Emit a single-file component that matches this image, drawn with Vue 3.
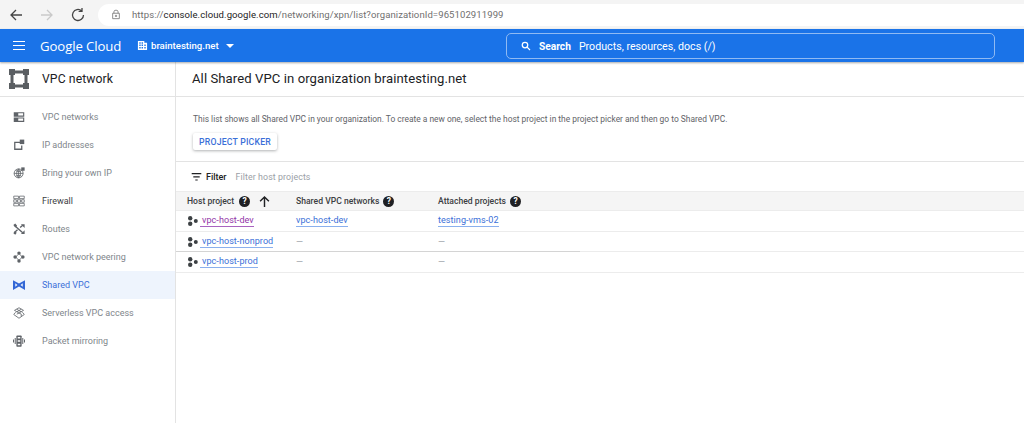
<script setup>
const nav = [
  { label: 'VPC networks', kind: 'net' },
  { label: 'IP addresses', kind: 'ip' },
  { label: 'Bring your own IP', kind: 'globe' },
  { label: 'Firewall', kind: 'fire', dark: true },
  { label: 'Routes', kind: 'routes' },
  { label: 'VPC network peering', kind: 'peer' },
  { label: 'Shared VPC', kind: 'shared', active: true },
  { label: 'Serverless VPC access', kind: 'server' },
  { label: 'Packet mirroring', kind: 'packet' }
]
const rows = [
  { name: 'vpc-host-dev', visited: true, net: 'vpc-host-dev', att: 'testing-vms-02' },
  { name: 'vpc-host-nonprod', net: '', att: '' },
  { name: 'vpc-host-prod', net: '', att: '' }
]
</script>

<template>
  <div class="page">
    <div class="chrome">
      <svg class="cicon back" viewBox="0 0 16 16"><path d="M14 8H3M8 3 3 8l5 5" /></svg>
      <svg class="cicon fwd" viewBox="0 0 16 16"><path d="M2 8h11M8 3l5 5-5 5" /></svg>
      <svg class="cicon reload" viewBox="0 0 16 16"><path d="M13.500 8A5.500 5.500 0 1 1 11.600 3.800M12 1v3.400H8.600" /></svg>
      <div class="omni">
        <svg class="lock" viewBox="0 0 12 12"><path d="M3.500 4.500V2.800a2.500 2 0 0 1 5 0V4.500M2 4.500h8V11H2z" /><path d="M5.300 7h1.400v1.400H5.300z" /></svg>
        <span class="url">https://<b>console.cloud.google.com</b>/networking/xpn/list?organizationId=965102911999</span>
      </div>
    </div>

    <header class="topbar">
      <div class="burger"><i></i><i></i><i></i></div>
      <span class="logo">Google Cloud</span>
      <svg class="org" viewBox="0 0 12 12"><path fill-rule="evenodd" d="M1 1h7v2h3v8H1zM2.500 2.500v1.500H4V2.500zM5 2.500v1.500h1.500V2.500zM2.500 5v1.500H4V5zM5 5v1.500h1.500V5zM8 5v1.500h1.500V5zM2.500 7.700v1.500H4V7.700zM5 7.700v1.500h1.500V7.700zM8 7.700v1.500h1.500V7.700z" /></svg>
      <span class="orgname">braintesting.net</span>
      <span class="caret"></span>
      <div class="search">
        <svg class="mag" viewBox="0 0 12 12"><circle cx="4.800" cy="4.800" r="3.300" /><path d="m7.300 7.300 3.500 3.500" /></svg>
        <b>Search</b>
        <span>Products, resources, docs (/)</span>
      </div>
    </header>

    <div class="body">
      <aside class="side">
        <div class="sidehead">
          <svg class="vpc" viewBox="0 0 20 20"><path d="M0 0h6v6H0zM14 0h6v6h-6zM0 14h6v6H0zM14 14h6v6h-6z" /><path d="M6 1.500h8v3H6zM6 15.500h8v3H6zM1.500 6h3v8h-3zM15.500 6h3v8h-3z" /></svg>
          <span>VPC network</span>
        </div>
        <nav class="navlist">
          <div v-for="n in nav" :key="n.label" class="item" :class="{ active: n.active, dark: n.dark }">
            <svg class="nicon" viewBox="0 0 16 16">
              <template v-if="n.kind === 'net'"><path d="M1 1.500h14v6H1zM1 8.500h14v6H1z" /><path fill="#fff" d="M7 3h6.500v3H7zM7 10h6.500v3H7z" /></template>
              <template v-else-if="n.kind === 'ip'"><path d="M1.500 3.500h8v1.700H3.200v7.600h7.600V8.500h1.700v6h-11z" /><path d="M9 .8h6v6H9z" /></template>
              <template v-else-if="n.kind === 'globe'"><circle class="line" cx="7.500" cy="8.500" r="6" /><path class="line" d="M1.500 8.500h12M7.500 2.500v12M3.500 4.500c2.500 2 5.500 2 8 0M3.500 12.500c2.500-2 5.500-2 8 0M7.500 2.500c-3.500 3.500-3.500 8.500 0 12M7.500 2.500c3.500 3.500 3.500 8.500 0 12" /><path d="M11 .5h4.500V5H11z" /></template>
              <template v-else-if="n.kind === 'fire'"><path class="line thin" d="M1 1.500h6.300v3.300H1zM8.700 1.500H15v3.300H8.700zM1 6.300h3.500v3.400H1zM6 6.300h4v3.400H6zM11.500 6.300H15v3.400h-3.500zM1 11.200h6.300v3.300H1zM8.700 11.200H15v3.300H8.700z" /></template>
              <template v-else-if="n.kind === 'routes'"><path class="bold" d="M1.500 3 13 13M1.500 13 6 9M9.500 6 13 3" /><path d="M10.500 1.500h5v5zM10.500 14.500h5v-5zM.5 2.500 3 .5l2.500 3-2 2.500zM.5 13.500l2-2.500 2.500 2-2 2.500z" /></template>
              <template v-else-if="n.kind === 'peer'"><path class="line" d="M8 3.500 12.500 8 8 12.500 3.500 8z" /><circle cx="8" cy="2.800" r="2.300" /><circle cx="8" cy="13.200" r="2.300" /><circle cx="2.800" cy="8" r="2.300" /><circle cx="13.200" cy="8" r="2.300" /></template>
              <template v-else-if="n.kind === 'shared'"><path d="M0 1.500 8 6l8-4.500v13L8 10l-8 4.500zM3 5.800v4.400L6 8zM13 5.800 10 8l3 2.200z" fill-rule="evenodd" /></template>
              <template v-else-if="n.kind === 'server'"><path class="line" d="M8 1 14 4.500 8 8 2 4.500zM3.500 7 1 10l7 5 7-5-2.500-3M5 3l6 3.500M11 3 5 6.500M5 9.500l3-1.500 3 1.500v3" /></template>
              <template v-else><path d="M5.500 .5h5a1 1 0 0 1 1 1v13a1 1 0 0 1-1 1h-5a1 1 0 0 1-1-1v-13a1 1 0 0 1 1-1z" /><path fill="#fff" d="M6.300 2.500h3.400v2H6.300zM6.300 7h3.400v2H6.300zM6.300 11.500h3.400v2H6.300z" /><path d="M2.300 4h1.300v8H2.300zM12.400 4h1.300v8h-1.300zM0 6h1.300v4H0zM14.700 6H16v4h-1.300z" /></template>
            </svg>
            <span>{{ n.label }}</span>
          </div>
        </nav>
      </aside>

      <main class="main">
        <h1 class="title">All Shared VPC in organization braintesting.net</h1>
        <section class="intro">
          <p>This list shows all Shared VPC in your organization. To create a new one, select the host project in the project picker and then go to Shared VPC.</p>
          <button class="picker">PROJECT PICKER</button>
        </section>
        <div class="filter">
          <svg class="ficon" viewBox="0 0 12 10"><path d="M0 0h12v1.500H0zM2 4h8v1.500H2zM4.500 8h3v1.500h-3z" /></svg>
          <b>Filter</b>
          <span>Filter host projects</span>
        </div>
        <div class="grid head">
          <div class="cell hostcell">Host project
            <span class="help">?</span>
            <svg class="sort" viewBox="0 0 10 10"><path d="M5 10V1M1 4.800 5 1l4 3.800" /></svg>
          </div>
          <div class="cell">Shared VPC networks <span class="help">?</span></div>
          <div class="cell">Attached projects <span class="help">?</span></div>
        </div>
        <div v-for="(r, i) in rows" :key="r.name" class="grid row" :class="'row' + i">
          <div class="cell first">
            <svg class="proj" viewBox="0 0 10 10"><circle cx="2.200" cy="2.200" r="2.200" /><circle cx="2.200" cy="7.800" r="2.200" /><circle cx="7.800" cy="5" r="2" /></svg>
            <a :class="{ visited: r.visited }">{{ r.name }}</a>
          </div>
          <div class="cell"><a v-if="r.net">{{ r.net }}</a><span v-else class="dash">—</span></div>
          <div class="cell"><a v-if="r.att">{{ r.att }}</a><span v-else class="dash">—</span></div>
        </div>
      </main>
    </div>
  </div>
</template>

<style>
html, body { margin: 0; background: #fff; overflow: hidden; }
</style>

<style scoped>
.page { width: 1024px; height: 423px; overflow: hidden; font-family: Roboto, "Liberation Sans", sans-serif; color: #202124; background: #fff; }
.chrome { height: 29px; background: #f4f4f4; display: flex; align-items: center; padding: 0 0 0 8px; box-sizing: border-box; }
.cicon { width: 16px; height: 16px; fill: none; stroke: #444; stroke-width: 1.300; flex: none; }
.fwd { stroke: #c9c9c9; margin-left: 15px; }
.reload { margin-left: 15px; }
.omni { margin-left: 12px; flex: 1; height: 22px; background: #fff; border-radius: 11px 0 0 11px; display: flex; align-items: center; padding-left: 13px; }
.lock { width: 10px; height: 11px; fill: none; stroke: #777; stroke-width: 1; flex: none; }
.url { margin-left: 11px; font-size: 9.550px; color: #6f6f6f; letter-spacing: .08px; white-space: nowrap; }
.url b { font-weight: 400; color: #222; }
.topbar { height: 33px; background: #1a73e8; color: #fff; display: flex; align-items: center; box-shadow: 0 1px 2px rgba(60,64,67,.45); position: relative; }
.burger { margin-left: 13px; width: 12px; display: flex; flex-direction: column; gap: 2.500px; }
.burger i { display: block; height: 1.500px; background: #fff; }
.logo { margin-left: 15px; font-size: 13.200px; width: 82px; letter-spacing: -.1px; white-space: nowrap; font-family: "Open Sans", Roboto, sans-serif; }
.org { width: 11px; height: 11px; margin-left: 15px; fill: #fff; }
.orgname { font-size: 9.600px; font-weight: 500; margin-left: 3px; }
.caret { margin-left: 7px; border: 4px solid transparent; border-top: 4px solid #fff; border-bottom: 0; }
.search { position: absolute; left: 506px; top: 4px; width: 487px; height: 24px; border: 1px solid #8fbaf3; border-radius: 5px; display: flex; align-items: center; font-size: 10.200px; }
.mag { width: 10px; height: 10px; margin-left: 14px; fill: none; stroke: #fff; stroke-width: 1.500; flex: none; }
.search b { margin-left: 8px; font-weight: 700; }
.search span { margin-left: 8px; font-size: 10.660px; }
.body { display: flex; height: 361px; }
.side { width: 176px; box-sizing: border-box; border-right: 1px solid #e3e3e3; flex: none; }
.sidehead { height: 35px; box-sizing: border-box; border-bottom: 1px solid #e3e3e3; display: flex; align-items: center; font-size: 12.200px; padding-left: 9px; letter-spacing: .1px; }
.vpc { width: 20px; height: 20px; fill: #5a5e62; margin-right: 13px; flex: none; }
.navlist { padding-top: 6px; }
.item { height: 28px; box-sizing: border-box; padding-bottom: 1px; display: flex; align-items: center; font-size: 9px; color: #80868b; padding-left: 13px; }
.item.dark { color: #3c4043; }
.item.active { background: #eef4fd; color: #3b6fd8; }
.item.active .nicon { fill: #3367d6; }
.nicon { width: 12px; height: 12px; fill: #5f6368; margin-right: 17px; flex: none; }
.line { fill: none; stroke: #5f6368; stroke-width: 1.100; }
.line.thin { stroke-width: 1; }
.bold { fill: none; stroke: #5f6368; stroke-width: 1.800; }
.main { flex: 1; min-width: 0; }
.title { margin: 0; height: 35px; box-sizing: border-box; border-bottom: 1px solid #e3e3e3; font-size: 13.100px; font-weight: 400; line-height: 34px; padding-left: 16px; letter-spacing: .08px; }
.intro { height: 65px; box-sizing: border-box; border-bottom: 1px solid #e3e3e3; padding: 16px 0 0 17px; }
.intro p { margin: 0; font-size: 8.420px; line-height: 13px; color: #5f6368; }
.picker { display: block; margin-top: 7px; width: 84px; height: 17px; padding: 0; background: #fff; border: 0; border-radius: 2px; box-shadow: 0 1px 3px rgba(60,64,67,.4); color: #3b6fd8; font: 500 8.700px Roboto, sans-serif; letter-spacing: .2px; }
.filter { height: 29px; display: flex; align-items: center; padding-left: 15px; font-size: 9px; }
.ficon { width: 11px; height: 8px; fill: #202124; flex: none; }
.filter b { margin-left: 4px; font-weight: 500; }
.filter span { margin-left: 9px; color: #9aa0a6; font-size: 8.800px; letter-spacing: .1px; }
.grid { display: grid; grid-template-columns: 109px 142px 1fr; padding-left: 11px; align-items: center; }
.head { height: 20px; background: #f5f5f5; border-top: 1px solid #ececec; border-bottom: 1px solid #ececec; box-sizing: border-box; font-size: 8.600px; font-weight: 500; color: #3c4043; }
.cell { display: flex; align-items: center; white-space: nowrap; }
.help { width: 11px; height: 11px; border-radius: 50%; background: #202124; color: #fff; font-size: 8.500px; line-height: 11px; text-align: center; margin-left: 4px; font-weight: 700; flex: none; }
.hostcell .help { margin-left: 5px; }
.sort { width: 11px; height: 11px; margin-left: 9px; fill: none; stroke: #202124; stroke-width: 1.300; flex: none; }
.row { height: 20.500px; border-bottom: 1px solid #ececec; box-sizing: border-box; font-size: 9.050px; }
.row1 { border-bottom: 0; background: linear-gradient(#d4d4d4, #d4d4d4) left bottom / 404px 1px no-repeat, linear-gradient(#ececec, #ececec) left bottom / 100% 1px no-repeat; }
.first { padding-left: 1px; }
.proj { width: 10px; height: 10px; fill: #3c4043; margin-right: 2px; flex: none; }
a { color: #3b6fd8; border-bottom: 1px solid #8ab0ee; line-height: 11px; letter-spacing: .05px; }
.first a { padding-left: 2px; }
a.visited { color: #9334a8; border-bottom-color: #a963c0; }
.dash { color: #9aa0a6; font-size: 9px; }
</style>
